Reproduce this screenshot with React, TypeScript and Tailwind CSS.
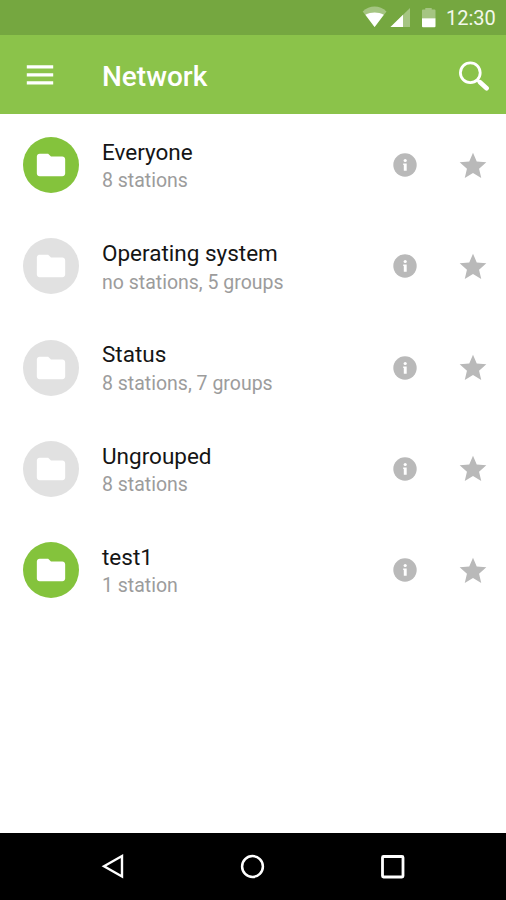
type Group = {
  name: string;
  summary: string;
  active: boolean;
};

const groups: Group[] = [
  { name: "Everyone", summary: "8 stations", active: true },
  { name: "Operating system", summary: "no stations, 5 groups", active: false },
  { name: "Status", summary: "8 stations, 7 groups", active: false },
  { name: "Ungrouped", summary: "8 stations", active: false },
  { name: "test1", summary: "1 station", active: true },
];

function StatusBar() {
  return (
    <div className="flex h-[35px] shrink-0 items-center justify-end bg-[#75a740] pr-[11px]">
      <svg className="h-[35px] w-[84px]" viewBox="0 0 84 35" fill="#fff">
        <path d="M.7 11.400C7.500 4.800 17.700 4.800 24.500 11.400L12.600 27z" opacity=".35" />
        <path d="M3.400 14.800C9 11.600 16.200 11.600 21.800 14.800L12.600 27z" />
        <path d="M48 8v19H28.500z" opacity=".35" />
        <path d="M41 14.800v12.200H28.500z" />
        <path d="M60 18.200V10.500q0-1 1-1h2.300V8h6.400v1.500H72.500q1 0 1 1v7.700z" opacity=".35" />
        <path d="M60 18.200H73.500V26.200q0 1-1 1H61q-1 0-1-1z" />
      </svg>
      <span className="w-[49px] pt-px text-[20px] leading-[35px] whitespace-nowrap text-[#f3f8ec]">
        12:30
      </span>
    </div>
  );
}

function Toolbar() {
  return (
    <header className="flex h-[79px] shrink-0 items-center bg-[#8bc34a] pr-4 pl-[26px] text-white">
      <button aria-label="Menu">
        <svg className="h-7 w-7" viewBox="0 0 28 28" fill="currentColor">
          <path d="M.8 4.200h26.400v3.200H.8zM.8 12.200h26.400v3.200H.8zM.8 20.200h26.400v3.200H.8z" />
        </svg>
      </button>
      <h1 className="ml-12 grow pt-1 text-[28px] leading-8 font-medium">
        Network
      </h1>
      <button aria-label="Search">
        <svg
          className="h-8 w-8"
          viewBox="0 0 32 32"
          fill="none"
          stroke="currentColor"
        >
          <circle cx="12.300" cy="13.700" r="9.900" strokeWidth="2.800" />
          <path d="M19 20.700l2.500 2.300" strokeWidth="3" />
          <path d="M22 23.300l6.600 6" strokeWidth="4.600" strokeLinecap="round" />
        </svg>
      </button>
    </header>
  );
}

function GroupRow({ group }: { group: Group }) {
  return (
    <li className="flex h-[101.250px] items-center pr-[17px] pl-[23px]">
      <div
        className={`flex size-14 items-center justify-center rounded-full ${
          group.active ? "bg-[#84c33c]" : "bg-[#e1e1e1]"
        }`}
      >
        <svg className="size-[34px]" viewBox="0 0 24 24" fill="#fff">
          <path d="M10 4H4c-1.100 0-1.990.9-1.990 2L2 18c0 1.100.9 2 2 2h16c1.100 0 2-.9 2-2V8c0-1.100-.9-2-2-2h-8l-2-2z" />
        </svg>
      </div>
      <div className="ml-[23px] grow pt-[3px]">
        <p className="text-[22.500px] leading-[29px] text-[#151515]">
          {group.name}
        </p>
        <p className="mt-[0.5px] text-[19.500px] leading-7 text-[#9c9c9c]">
          {group.summary}
        </p>
      </div>
      <div className="flex items-center gap-[38px] text-[#b9b9b9]">
        <svg className="size-7" viewBox="0 0 28 28" fill="currentColor">
          <circle cx="14" cy="14" r="11.700" />
          <g fill="#fff">
            <circle cx="14.200" cy="9.500" r="1.600" />
            <path d="M12.200 12.400h3.500v7.400h-2.900v-5.800h-.6z" />
          </g>
        </svg>
        <svg className="mt-px h-8 w-8" viewBox="0 0 24 24" fill="currentColor">
          <path d="M12 17.270L18.180 21l-1.640-7.030L22 9.240l-7.190-.61L12 2 9.190 8.630 2 9.240l5.460 4.730L5.820 21z" />
        </svg>
      </div>
    </li>
  );
}

function NavigationBar() {
  return (
    <nav className="flex h-[67px] shrink-0 items-center justify-between bg-black pr-[99px] pl-[98px] text-white">
      <svg className="size-7" viewBox="0 0 28 28" fill="none" stroke="currentColor">
        <path d="M6 13.200L24 3v20.500z" strokeWidth="2.400" />
      </svg>
      <svg className="size-7" viewBox="0 0 28 28" fill="none" stroke="currentColor">
        <circle cx="13.500" cy="13.500" r="10.400" strokeWidth="2.500" />
      </svg>
      <svg className="size-7" viewBox="0 0 28 28" fill="none" stroke="currentColor">
        <rect x="3.500" y="3.500" width="20.500" height="20.500" rx="1" strokeWidth="2.800" />
      </svg>
    </nav>
  );
}

export default function App() {
  return (
    <div className="flex h-[900px] w-[506px] flex-col overflow-hidden bg-white font-['Roboto',sans-serif]">
      <StatusBar />
      <Toolbar />
      <ul className="grow pt-[0.4px]">
        {groups.map((group) => (
          <GroupRow key={group.name} group={group} />
        ))}
      </ul>
      <NavigationBar />
    </div>
  );
}
